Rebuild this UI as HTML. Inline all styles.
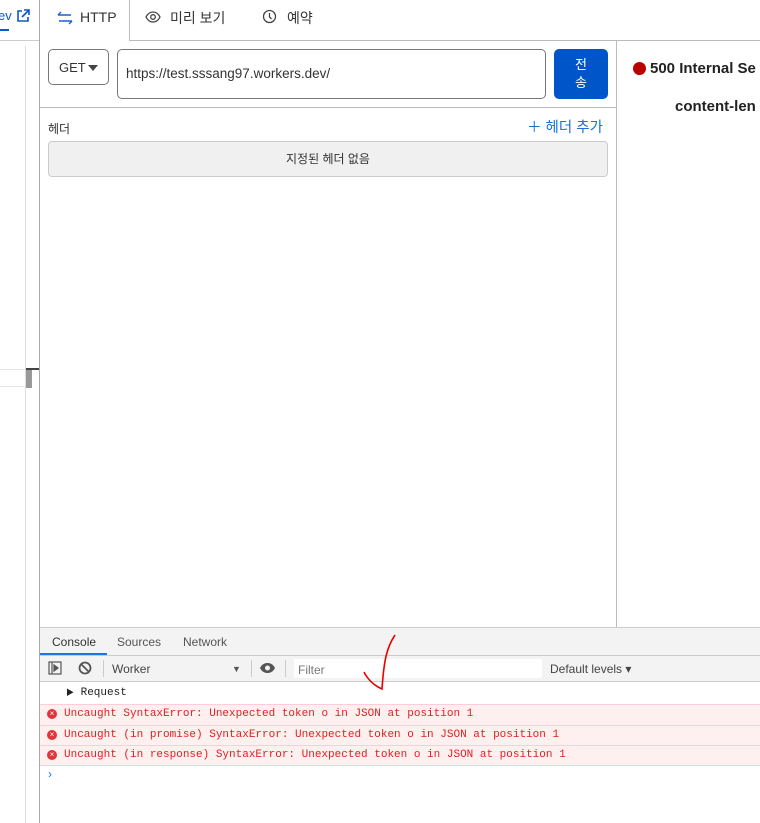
<!DOCTYPE html>
<html><head><meta charset="utf-8"><style>
*{box-sizing:border-box;margin:0;padding:0}
body{width:760px;height:823px;overflow:hidden;background:#fff;font-family:"Liberation Sans","Noto Sans CJK KR",sans-serif;position:relative;color:#222}
.a{position:absolute}
.mono{font-family:"Liberation Mono","Noto Sans CJK KR",monospace;font-size:11px}
</style></head><body>
<div class="a" style="left:0;top:0;width:39px;height:823px;background:#fff"></div>
<div class="a" style="left:0;top:0;width:30px;height:11px;font-size:13px;color:#0a58ca;"><span style="position:absolute;left:-2px;top:8px">ev</span></div>
<div class="a" style="left:0;top:29px;width:9px;height:2px;background:#0a58ca"></div>
<svg class="a" style="left:16px;top:9px" width="14" height="14" viewBox="0 0 14 14" fill="none" stroke="#0a58ca" stroke-width="1.6"><path d="M6 2H2v10h10V8M8 1h5v5M13 1L6 8"/></svg>
<div class="a" style="left:0;top:40px;width:39px;height:1px;background:#ccc"></div>
<div class="a" style="left:25px;top:46px;width:1px;height:777px;background:#ddd"></div>
<div class="a" style="left:0;top:369px;width:25px;height:1px;background:#e5e5e5"></div>
<div class="a" style="left:0;top:386px;width:25px;height:1px;background:#e5e5e5"></div>
<div class="a" style="left:26px;top:368px;width:13px;height:2px;background:#444"></div>
<div class="a" style="left:26px;top:370px;width:6px;height:18px;background:#999"></div>
<div class="a" style="left:39px;top:0;width:1px;height:823px;background:#aaa"></div>
<div class="a" style="left:129px;top:0;width:1px;height:41px;background:#bbb"></div>
<div class="a" style="left:130px;top:40px;width:630px;height:1px;background:#bbb"></div>
<svg class="a" style="left:57px;top:11px" width="16" height="14" viewBox="0 0 16 14" fill="none" stroke="#1a5fd0" stroke-width="1.4"><path d="M1 4h13M1 4l3-3M15 10H2M15 10l-3 3"/></svg>
<div class="a" style="left:80px;top:9px;font-size:14px;color:#333">HTTP</div>
<svg class="a" style="left:145px;top:10px" width="16" height="14" viewBox="0 0 16 14" fill="none" stroke="#444" stroke-width="1.3"><path d="M1 7C3 3 6 2 8 2s5 1 7 5c-2 4-5 5-7 5S3 11 1 7z"/><circle cx="8" cy="7" r="2.3"/></svg>
<div class="a" style="left:170px;top:8px;font-size:14px;color:#333">미리 보기</div>
<svg class="a" style="left:262px;top:9px" width="15" height="15" viewBox="0 0 15 15" fill="none" stroke="#444" stroke-width="1.3"><circle cx="7.5" cy="7.5" r="6"/><path d="M7.5 4v4l2 2"/></svg>
<div class="a" style="left:287px;top:8px;font-size:14px;color:#333">예약</div>
<div class="a" style="left:48px;top:49px;width:61px;height:36px;border:1px solid #777;border-radius:5px"></div>
<div class="a" style="left:59px;top:60px;font-size:13px;color:#333">GET</div>
<div class="a" style="left:88px;top:65px;width:0;height:0;border-left:5px solid transparent;border-right:5px solid transparent;border-top:6px solid #444"></div>
<div class="a" style="left:117px;top:49px;width:429px;height:50px;border:1px solid #777;border-radius:5px"></div>
<div class="a" style="left:126px;top:66px;font-size:13.5px;color:#333">https://test.sssang97.workers.dev/</div>
<div class="a" style="left:554px;top:49px;width:54px;height:50px;background:#0055c8;border-radius:5px;color:#fff;font-size:13px;text-align:center;line-height:18px;padding-top:7px">전<br>송</div>
<div class="a" style="left:40px;top:107px;width:576px;height:1px;background:#bbb"></div>
<div class="a" style="left:616px;top:41px;width:1px;height:586px;background:#bbb"></div>
<div class="a" style="left:48px;top:120px;font-size:12px;color:#333">헤더</div>
<div class="a" style="left:527px;top:116px;font-size:14.5px;color:#1a6fd8">＋ 헤더 추가</div>
<div class="a" style="left:48px;top:141px;width:560px;height:36px;background:#f0f0f0;border:1px solid #ccc;border-radius:4px;font-size:12px;text-align:center;line-height:34px;color:#333">지정된 헤더 없음</div>
<div class="a" style="left:633px;top:62px;width:13px;height:13px;border-radius:50%;background:#b00"></div>
<div class="a" style="left:650px;top:60px;font-size:15px;font-weight:bold;color:#222;white-space:nowrap">500 Internal Se</div>
<div class="a" style="left:675px;top:98px;font-size:15px;font-weight:bold;color:#222;white-space:nowrap">content-len</div>
<div class="a" style="left:40px;top:627px;width:720px;height:1px;background:#ccc"></div>
<div class="a" style="left:40px;top:628px;width:720px;height:27px;background:#f3f3f3"></div>
<div class="a" style="left:52px;top:635px;font-size:12px;color:#333">Console</div>
<div class="a" style="left:117px;top:635px;font-size:12px;color:#555">Sources</div>
<div class="a" style="left:183px;top:635px;font-size:12px;color:#555">Network</div>
<div class="a" style="left:40px;top:653px;width:67px;height:2px;background:#1a73e8"></div>
<div class="a" style="left:40px;top:655px;width:720px;height:1px;background:#ccc"></div>
<div class="a" style="left:40px;top:656px;width:720px;height:25px;background:#f3f3f3"></div>
<div class="a" style="left:40px;top:681px;width:720px;height:1px;background:#ccc"></div>
<svg class="a" style="left:48px;top:661px" width="14" height="14" viewBox="0 0 14 14" fill="none" stroke="#555" stroke-width="1.2"><rect x="1" y="1" width="12" height="12"/><path d="M4 1v12"/><path d="M6 4l4 3-4 3z" fill="#555"/></svg>
<svg class="a" style="left:78px;top:661px" width="14" height="14" viewBox="0 0 14 14" fill="none" stroke="#555" stroke-width="1.8"><circle cx="7" cy="7" r="5.5"/><path d="M3 3l8 8"/></svg>
<div class="a" style="left:103px;top:660px;width:1px;height:17px;background:#ccc"></div>
<div class="a" style="left:112px;top:662px;font-size:12px;color:#444">Worker</div>
<div class="a" style="left:232px;top:664px;font-size:9px;color:#555">▼</div>
<div class="a" style="left:251px;top:660px;width:1px;height:17px;background:#ccc"></div>
<svg class="a" style="left:259px;top:662px" width="17" height="12" viewBox="0 0 17 12"><path d="M1 6C3 2 6 1 8.5 1S14 2 16 6c-2 4-5 5-7.5 5S3 10 1 6z" fill="#555"/><circle cx="8.5" cy="6" r="2.5" fill="#f3f3f3"/></svg>
<div class="a" style="left:285px;top:660px;width:1px;height:17px;background:#ccc"></div>
<div class="a" style="left:294px;top:659px;width:248px;height:19px;background:#fff"></div>
<div class="a" style="left:298px;top:663px;font-size:12px;color:#777">Filter</div>
<div class="a" style="left:550px;top:662px;font-size:12px;color:#444">Default levels ▾</div>
<div class="a mono" style="left:66px;top:687px;color:#222"><span style="font-size:8px">▶</span> Request</div>
<div class="a" style="left:40px;top:704px;width:720px;height:62px;background:#fff0f0"></div>
<div class="a" style="left:40px;top:704px;width:720px;height:1px;background:#fcd"></div>
<div class="a" style="left:40px;top:725px;width:720px;height:1px;background:#fcd"></div>
<div class="a" style="left:40px;top:745px;width:720px;height:1px;background:#fcd"></div>
<div class="a" style="left:40px;top:765px;width:720px;height:1px;background:#fcd"></div>
<div class="a" style="left:47px;top:709px;width:10px;height:10px;border-radius:50%;background:#e0353a;color:#fff;font-size:8px;line-height:10px;text-align:center">×</div>
<div class="a" style="left:47px;top:730px;width:10px;height:10px;border-radius:50%;background:#e0353a;color:#fff;font-size:8px;line-height:10px;text-align:center">×</div>
<div class="a" style="left:47px;top:750px;width:10px;height:10px;border-radius:50%;background:#e0353a;color:#fff;font-size:8px;line-height:10px;text-align:center">×</div>
<div class="a mono" style="left:64px;top:708px;color:#e02020">Uncaught SyntaxError: Unexpected token o in JSON at position 1</div>
<div class="a mono" style="left:64px;top:729px;color:#e02020">Uncaught (in promise) SyntaxError: Unexpected token o in JSON at position 1</div>
<div class="a mono" style="left:64px;top:749px;color:#e02020">Uncaught (in response) SyntaxError: Unexpected token o in JSON at position 1</div>
<div class="a" style="left:48px;top:767px;font-size:12px;color:#1a73e8">›</div>
<svg class="a" style="left:355px;top:630px" width="60" height="65" viewBox="0 0 60 65" fill="none" stroke="#e00" stroke-width="1.6"><path d="M40 5c-8 12-11 24-13 54C18 55 12 48 9 42"/></svg>
</body></html>
